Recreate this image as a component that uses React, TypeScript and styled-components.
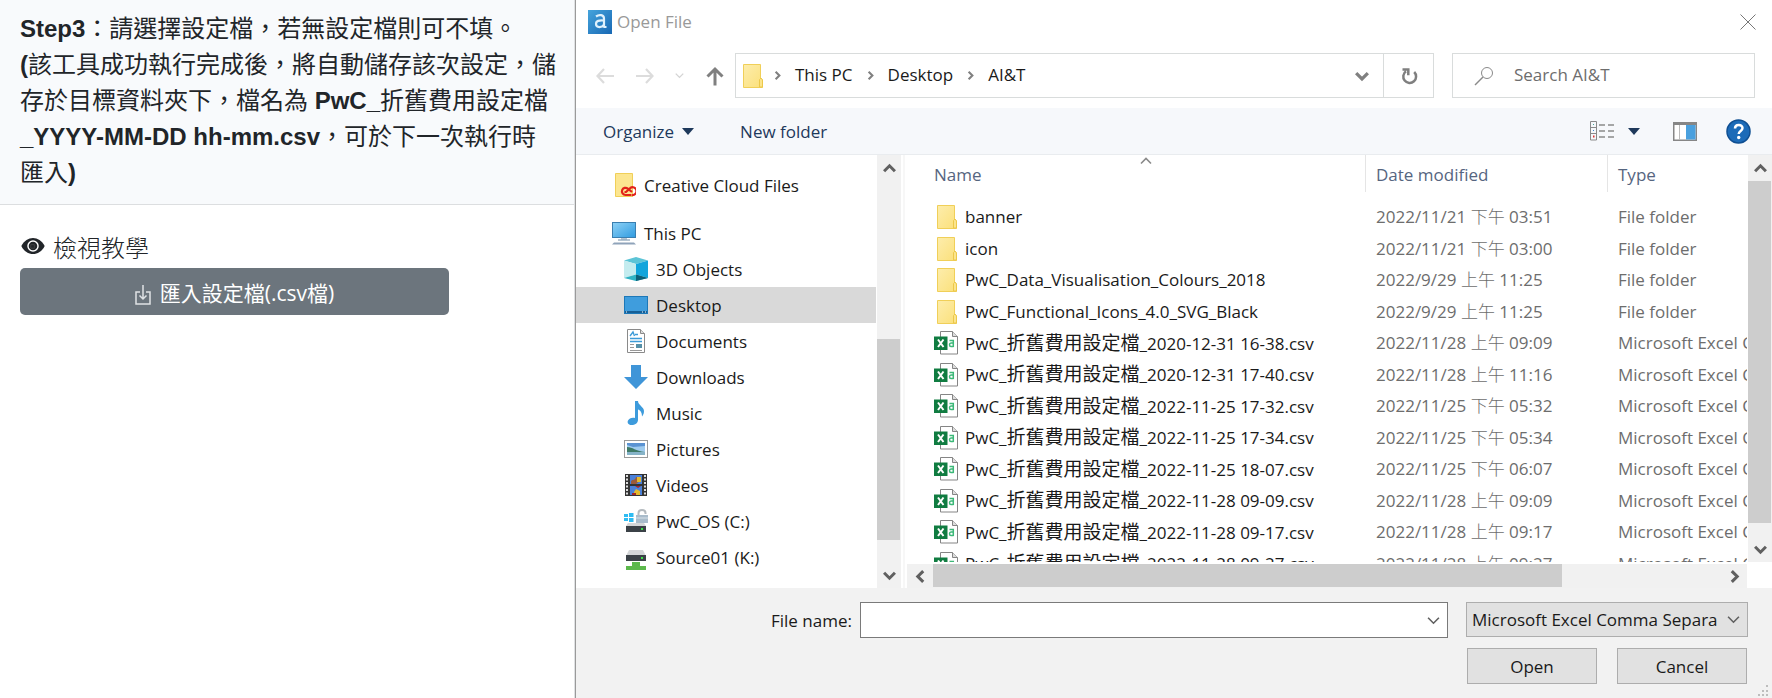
import React from 'react';
import styled, { createGlobalStyle, css } from 'styled-components';

const GlobalStyle = createGlobalStyle`
  * { box-sizing: border-box; }
  body {
    margin: 0;
    background: #fff;
    color: #212529;
    font-family: "Open Sans", "Noto Sans CJK TC", sans-serif;
    font-size: 17px;
  }
  button, input, select {
    font: inherit;
    color: inherit;
    margin: 0;
    padding: 0;
    border: 0;
    border-radius: 0;
    background: none;
    appearance: none;
  }
  button { cursor: pointer; }
  svg { display: block; flex: none; }
`;

/* ---------- page ---------- */

const Page = styled.div`
  display: flex;
  height: 100vh;
  min-height: 600px;
`;

const StepPanel = styled.section`
  flex: 0 0 575px;
  font-family: "Liberation Sans", "Noto Sans CJK TC", sans-serif;
  border-right: 1px solid #dfe1e3;
`;

const StepHeader = styled.header`
  padding: 11px 14px 13px 20px;
  background: #f8fafc;
  border-bottom: 1px solid #dcdee0;
`;

const StepText = styled.h1`
  margin: 0;
  font-size: 24px;
  line-height: 36px;
  font-weight: 400;
`;

const StepBody = styled.div`
  display: flex;
  flex-direction: column;
  align-items: flex-start;
  padding: 23px 20px;
`;

const TutorialLink = styled.a`
  display: flex;
  align-items: center;
  gap: 8px;
  height: 36px;
  margin-bottom: 4px;
  padding-left: 1px;
  color: #212529;
  font-size: 24px;
  font-weight: 300;
  text-decoration: none;
`;

const ImportButton = styled.button`
  display: flex;
  align-items: center;
  justify-content: center;
  gap: 9px;
  width: 429px;
  max-width: 100%;
  height: 47px;
  border-radius: 5px;
  background: #6c757d;
  color: #fff;
  font-family: "Open Sans", "Noto Sans CJK TC", sans-serif;
  font-size: 21px;
  svg { margin-top: 6px; }
`;

/* ---------- dialog ---------- */

const Dialog = styled.main`
  flex: 1;
  min-width: 0;
  display: flex;
  flex-direction: column;
  border-left: 1px solid #9a9a9a;
  background: #fff;
`;

const TitleBar = styled.header`
  display: flex;
  align-items: center;
  gap: 5px;
  height: 43px;
  padding: 0 16px 0 12px;
`;

const Title = styled.h2`
  flex: 1;
  margin: 0;
  font-size: 17px;
  font-weight: 400;
  color: #999;
`;

const AddressRow = styled.div`
  display: flex;
  align-items: center;
  height: 65px;
  padding: 0 17px 0 20px;
`;

const HistoryButtons = styled.div`
  display: flex;
  align-items: center;
  justify-content: space-between;
  width: 139px;
  padding-right: 11px;
`;

const Field = styled.div`
  display: flex;
  align-items: center;
  height: 45px;
  border: 1px solid #d9dcdc;
`;

const AddressBar = styled(Field)`
  flex: 1;
  min-width: 0;
  padding: 0 14px 0 4px;
`;

const Crumbs = styled.nav`
  flex: 1;
  display: flex;
  align-items: center;
  gap: 13px;
  padding-left: 9px;
  color: #1a1a1a;
  button { padding-bottom: 2px; }
`;

const RefreshButton = styled.button`
  display: grid;
  place-items: center;
  width: 50px;
  height: 45px;
  border: 1px solid #d9dcdc;
  border-left: 0;
`;

const SearchBox = styled(Field)`
  width: 303px;
  margin-left: 18px;
  padding-left: 21px;
  gap: 20px;
`;

const SearchInput = styled.input`
  flex: 1;
  min-width: 0;
  padding-bottom: 2px;
  outline: none;
  &::placeholder { color: #6d6d6d; opacity: 1; }
`;

const Toolbar = styled.div`
  display: flex;
  align-items: center;
  gap: 46px;
  height: 47px;
  padding: 0 21px 0 27px;
  background: #f6f8fb;
  border-bottom: 1px solid #e9ecef;
  color: #1e395b;
`;

const ToolbarButton = styled.button`
  display: flex;
  align-items: center;
  gap: 8px;
`;

const ToolbarIcons = styled.div`
  display: flex;
  align-items: center;
  margin-left: auto;
  gap: 29px;
`;

const ViewButton = styled(ToolbarButton)`
  gap: 14px;
  margin-right: 4px;
`;

const Browser = styled.div`
  flex: 1;
  min-height: 0;
  display: flex;
`;

/* ---------- folder tree ---------- */

const Tree = styled.ul`
  flex: 0 0 301px;
  margin: 0;
  padding: 12px 1px 0 0;
  list-style: none;
  overflow: hidden;
`;

const TreeItem = styled.li<{ $depth: number; $selected?: boolean; $gapAfter?: boolean }>`
  display: flex;
  align-items: center;
  gap: 8px;
  height: 36px;
  padding-left: ${(p) => 36 + p.$depth * 12}px;
  margin-bottom: ${(p) => (p.$gapAfter ? 12 : 0)}px;
  background: ${(p) => (p.$selected ? '#d9d9d9' : 'transparent')};
  color: #1a1a1a;
`;

/* ---------- scroll bars ---------- */

const Bar = styled.div<{ $horizontal?: boolean }>`
  display: flex;
  background: #f1f1f1;
  ${(p) =>
    p.$horizontal
      ? css`flex-direction: row; height: 24px;`
      : css`flex-direction: column; width: 24px;`}
`;

const BarButton = styled.button`
  flex: 0 0 26px;
  display: grid;
  place-items: center;
`;

const BarGap = styled.div<{ $share: number }>`
  flex: ${(p) => p.$share} 0 0;
`;

const BarThumb = styled(BarGap)`
  margin: 0 1px 1px 0;
  background: #cdcdcd;
`;

/* ---------- file list ---------- */

const ListPane = styled.div`
  flex: 1;
  min-width: 0;
  display: grid;
  grid-template-columns: minmax(0, 1fr) 24px;
  grid-template-rows: minmax(0, 1fr) 24px;
  row-gap: 2px;
  margin-left: 2px;
  border-left: 2px solid #f7f7f7;
`;

const ListViewport = styled.div`
  overflow: hidden;
  margin-right: 1px;
`;

const HorizontalSlot = styled.div`
  margin: 0 1px 0 2px;
`;

const FileTable = styled.table`
  width: 100%;
  table-layout: fixed;
  border-collapse: separate;
  border-spacing: 0;
  white-space: nowrap;
`;

const HeadCell = styled.th<{ $width: number }>`
  width: ${(p) => p.$width}px;
  height: 37px;
  padding: 2px 0 0 10px;
  border-left: 1px solid #e5e5e5;
  text-align: left;
  font-weight: 400;
  color: #56657f;
`;

const NameHeadCell = styled.th`
  padding: 0 0 0 10px;
  font-weight: 400;
  color: #56657f;
`;

const SortButton = styled.button`
  position: relative;
  display: block;
  width: 100%;
  height: 37px;
  padding: 2px 0 0 19px;
  text-align: left;
`;

const SortMark = styled.span`
  position: absolute;
  top: 0;
  left: 50%;
`;

const HeadSpacer = styled.td`
  height: 9px;
  padding: 0;
`;

const FileRow = styled.tr`
  height: 32px;
  &:nth-child(odd) { height: 31px; }
`;

const Cell = styled.td`
  padding: 0 0 0 11px;
  line-height: 24px;
  color: #6d6d6d;
  overflow: hidden;
`;

const NameCell = styled(Cell)`
  padding-left: 29px;
  color: #1a1a1a;
`;

const NameInner = styled.div`
  display: flex;
  align-items: center;
  gap: 7px;
`;

const Cjk = styled.span`
  font-size: 19px;
  line-height: 24px;
`;

const LightCjk = styled(Cjk)`
  font-size: 17px;
  font-weight: 300;
`;

/* ---------- footer ---------- */

const Footer = styled.footer`
  position: relative;
  display: grid;
  grid-template-columns: minmax(0, 1fr) 282px;
  gap: 10px 18px;
  height: 110px;
  padding: 14px 24px 16px 195px;
  background: #f2f2f2;
  color: #1a1a1a;
`;

const FileNameGroup = styled.div`
  display: flex;
  align-items: center;
  gap: 8px;
`;

const FileNameBox = styled.div`
  flex: 1;
  display: flex;
  align-items: center;
  height: 36px;
  padding: 0 7px 0 6px;
  border: 1px solid #7a7a7a;
  background: #fff;
`;

const FileNameInput = styled.input`
  flex: 1;
  min-width: 0;
  outline: none;
`;

const TypeSelectWrap = styled.div`
  display: grid;
  grid-template-columns: minmax(0, 1fr) 26px;
  align-items: center;
  height: 35px;
  border: 1px solid #adadad;
  background: #e1e1e1;
`;

const TypeSelect = styled.select`
  grid-area: 1 / 1 / 2 / 3;
  width: 100%;
  height: 33px;
  padding: 0 26px 0 5px;
`;

const TypeArrow = styled.span`
  grid-area: 1 / 2 / 2 / 3;
  pointer-events: none;
  padding-left: 6px;
`;

const Actions = styled.div`
  grid-column: 2;
  display: flex;
  justify-content: space-between;
  padding: 0 1px;
`;

const ActionButton = styled.button`
  width: 130px;
  height: 36px;
  border: 1px solid #adadad;
  background: #e1e1e1;
`;

const Grip = styled.span`
  position: absolute;
  right: 3px;
  bottom: 1px;
`;

/* ---------- drawings ---------- */

type Dir = 'up' | 'down' | 'left' | 'right';
const turn: Record<Dir, number> = { down: 0, left: 90, up: 180, right: 270 };

const Chevron = ({ dir, size = 13, width = 2, color = '#606060' }: { dir: Dir; size?: number; width?: number; color?: string }) => (
  <svg width={size} height={size} viewBox="0 0 12 12" fill="none" stroke={color} strokeWidth={width} aria-hidden="true">
    <path d="M1 3.5 6 8.5 11 3.5" transform={`rotate(${turn[dir]} 6 6)`} />
  </svg>
);

const Triangle = () => (
  <svg width="12" height="7" viewBox="0 0 12 7" aria-hidden="true">
    <path d="M0 0h12L6 7z" fill="#1e395b" />
  </svg>
);

const Arrow = ({ dir, color, width }: { dir: Dir; color: string; width: number }) => (
  <svg width="18" height="20" viewBox="0 0 18 20" fill="none" stroke={color} strokeWidth={width} aria-hidden="true">
    <path
      d={
        dir === 'left'
          ? 'M18 10H1.5M8 3 1.5 10 8 17'
          : dir === 'right'
            ? 'M0 10h16.500M10 3l6.500 7L10 17'
            : 'M9 19.500V3M1.500 10.500 9 3l7.500 7.500'
      }
    />
  </svg>
);

const Eye = () => (
  <svg width="24" height="18" viewBox="0 0 26 20" aria-hidden="true">
    <path d="M0 10C3 4 8 1 13 1s10 3 13 9c-3 6-8 9-13 9S3 16 0 10z" fill="#212529" />
    <circle cx="13" cy="10" r="5.600" fill="none" stroke="#fff" strokeWidth="1.600" />
    <path d="M10.500 8.500h4v4h-4z" fill="none" stroke="#555" strokeWidth=".6" />
  </svg>
);

const ImportIcon = () => (
  <svg width="16" height="20" viewBox="0 0 16 20" fill="none" stroke="#dfe2e5" strokeWidth="1.500" aria-hidden="true">
    <path d="M5 7H1v12h14V7h-4M8 0v14M4.500 10.500 8 14l3.500-3.500" />
  </svg>
);

const AppLogo = () => (
  <svg width="24" height="24" viewBox="0 0 24 24" aria-hidden="true">
    <defs>
      <linearGradient id="logo" x1="0" y1="0" x2="1" y2="1">
        <stop offset="0" stopColor="#45a4dc" />
        <stop offset="1" stopColor="#1868b4" />
      </linearGradient>
    </defs>
    <rect width="24" height="24" fill="url(#logo)" />
    <path d="M8 6.500c3-2.200 8-2 8 2.200v8.800M16 10.500c-5-.5-8 .3-8 3.600 0 4 6.500 3.800 8 .3" fill="none" stroke="#dff1fc" strokeWidth="2.200" />
    <path d="M15.500 17h3" stroke="#dff1fc" strokeWidth="2" />
  </svg>
);

const Close = () => (
  <svg width="16" height="16" viewBox="0 0 16 16" stroke="#777" aria-hidden="true">
    <path d="m.5.5 15 15M15.500.5l-15 15" />
  </svg>
);

const Refresh = () => (
  <svg width="18" height="18" viewBox="0 0 18 18" fill="none" stroke="#7f7f7f" strokeWidth="2.500" aria-hidden="true">
    <path d="M14.200 5A6.400 6.400 0 1 1 6 4.300M2.500 2.600h5.800v5.600" />
  </svg>
);

const SearchIcon = () => (
  <svg width="20" height="20" viewBox="0 0 20 20" fill="none" stroke="#8a8a8a" aria-hidden="true">
    <circle cx="13" cy="7" r="5.500" />
    <path d="m9 11-8 8" strokeWidth="1.400" />
  </svg>
);

const Folder = () => (
  <svg width="24" height="26" viewBox="0 0 24 26" aria-hidden="true">
    <defs>
      <linearGradient id="folder" x1="0" y1="0" x2="1" y2="1">
        <stop offset="0" stopColor="#fdedac" />
        <stop offset="1" stopColor="#fbe07a" />
      </linearGradient>
    </defs>
    <path d="M3.500 1.500h17V15l2 2v7.500h-19z" fill="url(#folder)" stroke="#f0cf58" />
    <path d="M19.500 24V16.500l1.500-1.500 1.500 2V24z" fill="#fbe48c" stroke="#ecc84a" />
  </svg>
);

const CloudFolder = () => (
  <svg width="24" height="26" viewBox="0 0 24 26" aria-hidden="true">
    <path d="M3.500 1.500h17V24.500h-17z" fill="#fce690" stroke="#f0cf58" />
    <g fill="none" stroke="#e2231a" strokeWidth="2.200">
      <path d="M19.500 23h-6a3.600 3.600 0 1 1 2.300-6.400l4.200 3.400" />
      <path d="M12.500 20h1.500l4.300-4a3.900 3.900 0 1 1 1.700 7" />
    </g>
  </svg>
);

const Computer = () => (
  <svg width="24" height="24" viewBox="0 0 24 24" aria-hidden="true">
    <defs>
      <linearGradient id="screen" x1="0" y1="0" x2="1" y2="1">
        <stop offset="0" stopColor="#8fd2f6" />
        <stop offset="1" stopColor="#2f9be0" />
      </linearGradient>
    </defs>
    <rect x=".5" y="1.500" width="23" height="15" fill="url(#screen)" stroke="#3a7fb0" />
    <path d="M6 19h12M9 18h6" stroke="#9fb3c4" strokeWidth="1.500" />
    <path d="M2 21.500h20l2 2H0z" fill="#8fa3ba" />
  </svg>
);

const Cube = () => (
  <svg width="24" height="24" viewBox="0 0 24 24" aria-hidden="true">
    <path d="M12 0l12 3.500L12 7 0 3.500z" fill="#5cc4d6" />
    <path d="M0 3.500 12 7v10.500L0 21z" fill="#c4ecef" />
    <path d="M24 3.500 12 7v10.500L24 21z" fill="#11a5dc" />
    <path d="M0 21l12-3.500L24 21l-12 3z" fill="#2fb3c4" />
    <path d="M12 17.500 24 21l-12 3z" fill="#0a5f78" />
  </svg>
);

const DesktopIcon = () => (
  <svg width="24" height="24" viewBox="0 0 24 24" aria-hidden="true">
    <rect x=".5" y="3.500" width="23" height="17" fill="#3f9ddd" stroke="#1d78b8" />
    <path d="M1 18h22v2H1z" fill="#175f96" />
    <path d="M2 19h1M18 19h1M21 19h1" stroke="#fff" />
  </svg>
);

const DocumentIcon = () => (
  <svg width="24" height="24" viewBox="0 0 24 24" aria-hidden="true">
    <path d="M3.500.5h13l4 4v19h-17z" fill="#fff" stroke="#8a8a8a" />
    <path d="M16.500.5v4h4" fill="#ddd" stroke="#8a8a8a" />
    <path d="M6 7l3-4 1.500 4M11 5.500h3M6 9.500h12M6 12.500h12" fill="none" stroke="#3c9bd8" strokeWidth="1.400" />
    <path d="M6 15.500h4M6 18.500h4M6 21.500h12" stroke="#999" />
    <path d="M12 15h6v4h-6z" fill="#5590a8" />
  </svg>
);

const DownloadIcon = () => (
  <svg width="24" height="26" viewBox="0 0 24 26" aria-hidden="true">
    <path d="M7 1h10v12h7L12 25 0 13h7z" fill="#3f95d8" />
  </svg>
);

const MusicIcon = () => (
  <svg width="24" height="26" viewBox="0 0 24 26" aria-hidden="true">
    <path d="M11 1h3c0 4 6 6 6 10 0 3-1 4-2 5.500C18 12 16 10 14 9.500V20c0 3-3 5-6.500 5S3 22.500 4 20.500s4-3.500 7-2.500z" fill="#3d9bdc" />
  </svg>
);

const PictureIcon = () => (
  <svg width="24" height="24" viewBox="0 0 24 24" aria-hidden="true">
    <rect x=".5" y="3.500" width="23" height="17" fill="#fff" stroke="#9a9a9a" />
    <path d="M3 6h18v12H3z" fill="#9fcbee" />
    <path d="M3 6h18v3l-12 1-6-2z" fill="#5b93d2" />
    <path d="M3 10c6 0 8 4 18 5H3z" fill="#3f7a66" />
    <path d="M3 15h18v3H3z" fill="#86b3c8" />
  </svg>
);

const VideoIcon = () => (
  <svg width="24" height="24" viewBox="0 0 24 24" aria-hidden="true">
    <path d="M1 1h22v22H1z" fill="#333" />
    <path d="M3 2v20M21 2v20" stroke="#ddd" strokeWidth="2" strokeDasharray="2 1.500" />
    <path d="M6 2h12v9H6zM6 13h12v9H6z" fill="#4a80d8" />
    <path d="M7 8c2-2 4 0 5-4l4 1v3l-4 3H7z" fill="#9a5a3a" />
    <path d="M13 4h4v5h-4zM10 19l2-3 4 2v4h-6z" fill="#e4b92c" />
    <path d="M11 13l3 2 3-2zM8 20h4v2H8z" fill="#a3262a" />
  </svg>
);

const SystemDrive = () => (
  <svg width="24" height="26" viewBox="0 0 24 26" aria-hidden="true">
    <path d="M0 6h4v3H0zM5 5h4.500v4H5zM0 10h4v3H0zM5 10h4.500v4H5z" fill="#2fbcf2" />
    <path d="M14.500 7V5c0-4 7-4 7 0v1" fill="none" stroke="#b4babf" strokeWidth="2" />
    <path d="M12 7h12v8H12z" fill="#a9bccb" />
    <path d="M12 10h12" stroke="#d8e2ea" />
    <path d="M4 15h16l2 3H2z" fill="#d4d6d8" />
    <path d="M2 18h20v6H2z" fill="#3b4147" />
    <path d="M17 20h2v2h-2z" fill="#3fe04a" />
  </svg>
);

const NetworkDrive = () => (
  <svg width="24" height="26" viewBox="0 0 24 26" aria-hidden="true">
    <path d="M5 6h14l3 6H2z" fill="#d4d6d8" />
    <path d="M2 11h20v6H2z" fill="#3b4147" />
    <path d="M17 13h2v2h-2z" fill="#3fe04a" />
    <path d="M8 18h8v4h6v4H2v-4h6z" fill="#5cb84c" />
  </svg>
);

const CsvIcon = () => (
  <svg width="24" height="26" viewBox="0 0 24 26" aria-hidden="true">
    <path d="M6.500 1.500h12l5 5v17.500h-17z" fill="#fff" stroke="#858585" />
    <path d="M18.500 1.500v5h5" fill="#ddd" stroke="#858585" />
    <path d="M15.500 10.500h3.800V17M19.500 13H17c-2 0-2 3.500 0 3.500h2.500" fill="none" stroke="#3cb878" strokeWidth="1.500" />
    <path d="M0 6.500h13.500V20H0z" fill="#107c41" />
    <path d="M4 9.500l5.500 7.500M9.500 9.500 4 17" stroke="#fff" strokeWidth="2" />
  </svg>
);

const ViewIcon = () => (
  <svg width="24" height="20" viewBox="0 0 24 20" fill="none" stroke="#8a8a8a" aria-hidden="true">
    <path d="M.5.500h6v18.500h-6zM.5 6.500h6M.5 12.500h6" />
    <path d="M9 4h6M18 4h6M9 10h6M18 10h6M9 16h6M18 16h6" strokeWidth="1.400" />
    <path d="M3 3.500h1" stroke="#4a9" />
    <path d="M3 9.500h1" stroke="#48c" />
    <path d="M3 15.500h1.500" stroke="#d33" strokeWidth="2" />
  </svg>
);

const PaneIcon = () => (
  <svg width="24" height="19" viewBox="0 0 24 19" aria-hidden="true">
    <path d="M.75.75h22.500v17.500H.75z" fill="#fff" stroke="#868686" strokeWidth="1.500" />
    <path d="M0 0h24v3H0z" fill="#868686" />
    <path d="M6.500 3v15" stroke="#bbb" />
    <path d="M13 3h9.500v14.500H13z" fill="#4aa0de" />
  </svg>
);

const HelpIcon = () => (
  <svg width="25" height="25" viewBox="0 0 25 25" aria-hidden="true">
    <circle cx="12.500" cy="12.500" r="11.500" fill="#1c6bb8" stroke="#0f4f92" strokeWidth="1.500" />
    <path d="M9 9.500c0-4.500 7.500-4.500 7.500-.5 0 3-3.800 2.800-3.800 6" fill="none" stroke="#fff" strokeWidth="2.500" />
    <circle cx="12.700" cy="18.500" r="1.700" fill="#fff" />
  </svg>
);

const GripDots = () => (
  <svg width="12" height="12" viewBox="0 0 12 12" fill="#bdbdbd" aria-hidden="true">
    <path d="M9 0h2v2H9zM5 5h2v2H5zM9 5h2v2H9zM1 9h2v2H1zM5 9h2v2H5zM9 9h2v2H9z" />
  </svg>
);

/* ---------- data ---------- */

const treeItems = [
  { label: 'Creative Cloud Files', icon: <CloudFolder />, depth: 0, gapAfter: true },
  { label: 'This PC', icon: <Computer />, depth: 0 },
  { label: '3D Objects', icon: <Cube />, depth: 1 },
  { label: 'Desktop', icon: <DesktopIcon />, depth: 1, selected: true },
  { label: 'Documents', icon: <DocumentIcon />, depth: 1 },
  { label: 'Downloads', icon: <DownloadIcon />, depth: 1 },
  { label: 'Music', icon: <MusicIcon />, depth: 1 },
  { label: 'Pictures', icon: <PictureIcon />, depth: 1 },
  { label: 'Videos', icon: <VideoIcon />, depth: 1 },
  { label: 'PwC_OS (C:)', icon: <SystemDrive />, depth: 1 },
  { label: 'Source01 (K:)', icon: <NetworkDrive />, depth: 1 },
];

const folders = [
  ['banner', '2022/11/21', '下午', '03:51'],
  ['icon', '2022/11/21', '下午', '03:00'],
  ['PwC_Data_Visualisation_Colours_2018', '2022/9/29', '上午', '11:25'],
  ['PwC_Functional_Icons_4.0_SVG_Black', '2022/9/29', '上午', '11:25'],
];

const csvFiles = [
  ['2020-12-31 16-38', '2022/11/28', '上午', '09:09'],
  ['2020-12-31 17-40', '2022/11/28', '上午', '11:16'],
  ['2022-11-25 17-32', '2022/11/25', '下午', '05:32'],
  ['2022-11-25 17-34', '2022/11/25', '下午', '05:34'],
  ['2022-11-25 18-07', '2022/11/25', '下午', '06:07'],
  ['2022-11-28 09-09', '2022/11/28', '上午', '09:09'],
  ['2022-11-28 09-17', '2022/11/28', '上午', '09:17'],
  ['2022-11-28 09-27', '2022/11/28', '上午', '09:27'],
];

const ScrollBar = ({ horizontal, before, thumb, after }: { horizontal?: boolean; before: number; thumb: number; after: number }) => (
  <Bar $horizontal={horizontal}>
    <BarButton aria-label={horizontal ? 'Scroll left' : 'Scroll up'}>
      <Chevron dir={horizontal ? 'left' : 'up'} width={2.8} />
    </BarButton>
    <BarGap $share={before} />
    <BarThumb $share={thumb} />
    <BarGap $share={after} />
    <BarButton aria-label={horizontal ? 'Scroll right' : 'Scroll down'}>
      <Chevron dir={horizontal ? 'right' : 'down'} width={2.8} />
    </BarButton>
  </Bar>
);

const Separator = () => <Chevron dir="right" size={9} width={2.8} color="#808080" />;

const Entry = ({ icon, name, date, half, time, type }: { icon: React.ReactNode; name: React.ReactNode; date: string; half: string; time: string; type: string }) => (
  <FileRow>
    <NameCell>
      <NameInner>
        {icon}
        <span>{name}</span>
      </NameInner>
    </NameCell>
    <Cell>
      {date} <LightCjk>{half}</LightCjk> {time}
    </Cell>
    <Cell>{type}</Cell>
  </FileRow>
);

export default function App() {
  return (
    <>
      <GlobalStyle />
      <Page>
        <StepPanel lang="zh-Hant">
          <StepHeader>
            <StepText>
              <b>Step3</b>：請選擇設定檔，若無設定檔則可不填。
              <br />
              <b>(</b>該工具成功執行完成後，將自動儲存該次設定，儲存於目標資料夾下，檔名為 <b>PwC_</b>折舊費用設定檔
              <b>_YYYY-MM-DD hh-mm.csv</b>，可於下一次執行時匯入<b>)</b>
            </StepText>
          </StepHeader>
          <StepBody>
            <TutorialLink href="#tutorial">
              <Eye />
              檢視教學
            </TutorialLink>
            <ImportButton>
              <ImportIcon />
              匯入設定檔(.csv檔)
            </ImportButton>
          </StepBody>
        </StepPanel>

        <Dialog>
          <TitleBar>
            <AppLogo />
            <Title>Open File</Title>
            <button aria-label="Close">
              <Close />
            </button>
          </TitleBar>

          <AddressRow>
            <HistoryButtons>
              <button aria-label="Back"><Arrow dir="left" color="#dcdcdc" width={2.2} /></button>
              <button aria-label="Forward"><Arrow dir="right" color="#dcdcdc" width={2.2} /></button>
              <button aria-label="Recent locations"><Chevron dir="down" size={9} width={1.8} color="#d4d4d4" /></button>
              <button aria-label="Up"><Arrow dir="up" color="#808080" width={3} /></button>
            </HistoryButtons>
            <AddressBar>
              <Folder />
              <Crumbs aria-label="Location">
                <Separator />
                <button>This PC</button>
                <Separator />
                <button>Desktop</button>
                <Separator />
                <button>AI&amp;T</button>
              </Crumbs>
              <button aria-label="Previous locations"><Chevron dir="down" size={14} width={2.8} color="#808080" /></button>
            </AddressBar>
            <RefreshButton aria-label="Refresh"><Refresh /></RefreshButton>
            <SearchBox>
              <SearchIcon />
              <SearchInput type="search" aria-label="Search AI&T" placeholder="Search AI&T" />
            </SearchBox>
          </AddressRow>

          <Toolbar>
            <ToolbarButton>
              Organize
              <Triangle />
            </ToolbarButton>
            <ToolbarButton>New folder</ToolbarButton>
            <ToolbarIcons>
              <ViewButton aria-label="Change your view">
                <ViewIcon />
                <Triangle />
              </ViewButton>
              <button aria-label="Show the preview pane"><PaneIcon /></button>
              <button aria-label="Help"><HelpIcon /></button>
            </ToolbarIcons>
          </Toolbar>

          <Browser>
            <Tree>
              {treeItems.map((item) => (
                <TreeItem key={item.label} $depth={item.depth} $selected={item.selected} $gapAfter={item.gapAfter}>
                  {item.icon}
                  {item.label}
                </TreeItem>
              ))}
            </Tree>
            <ScrollBar before={159} thumb={202} after={21} />

            <ListPane>
              <ListViewport>
                <FileTable>
                  <thead>
                    <tr>
                      <NameHeadCell>
                        <SortButton>
                          Name
                          <SortMark><Chevron dir="up" size={12} width={1.6} color="#8a8a8a" /></SortMark>
                        </SortButton>
                      </NameHeadCell>
                      <HeadCell $width={242}>Date modified</HeadCell>
                      <HeadCell $width={140}>Type</HeadCell>
                    </tr>
                  </thead>
                  <tbody lang="zh-Hant">
                    <tr><HeadSpacer colSpan={3} /></tr>
                    {folders.map(([name, date, half, time]) => (
                      <Entry key={name} icon={<Folder />} name={name} date={date} half={half} time={time} type="File folder" />
                    ))}
                    {csvFiles.map(([stamp, date, half, time]) => (
                      <Entry
                        key={stamp}
                        icon={<CsvIcon />}
                        name={<>PwC_<Cjk>折舊費用設定檔</Cjk>_{stamp}.csv</>}
                        date={date}
                        half={half}
                        time={time}
                        type="Microsoft Excel Comma Separated Values File"
                      />
                    ))}
                  </tbody>
                </FileTable>
              </ListViewport>
              <ScrollBar before={0} thumb={343} after={12} />
              <HorizontalSlot>
                <ScrollBar horizontal before={0} thumb={630} after={158} />
              </HorizontalSlot>
            </ListPane>
          </Browser>

          <Footer>
            <FileNameGroup>
              <label htmlFor="file-name">File name:</label>
              <FileNameBox>
                <FileNameInput id="file-name" type="text" />
                <button aria-label="Previous file names"><Chevron dir="down" size={13} width={1.5} /></button>
              </FileNameBox>
            </FileNameGroup>
            <TypeSelectWrap>
              <TypeSelect aria-label="File type">
                <option>Microsoft Excel Comma Separa</option>
              </TypeSelect>
              <TypeArrow><Chevron dir="down" size={13} width={1.5} /></TypeArrow>
            </TypeSelectWrap>
            <Actions>
              <ActionButton>Open</ActionButton>
              <ActionButton>Cancel</ActionButton>
            </Actions>
            <Grip><GripDots /></Grip>
          </Footer>
        </Dialog>
      </Page>
    </>
  );
}
